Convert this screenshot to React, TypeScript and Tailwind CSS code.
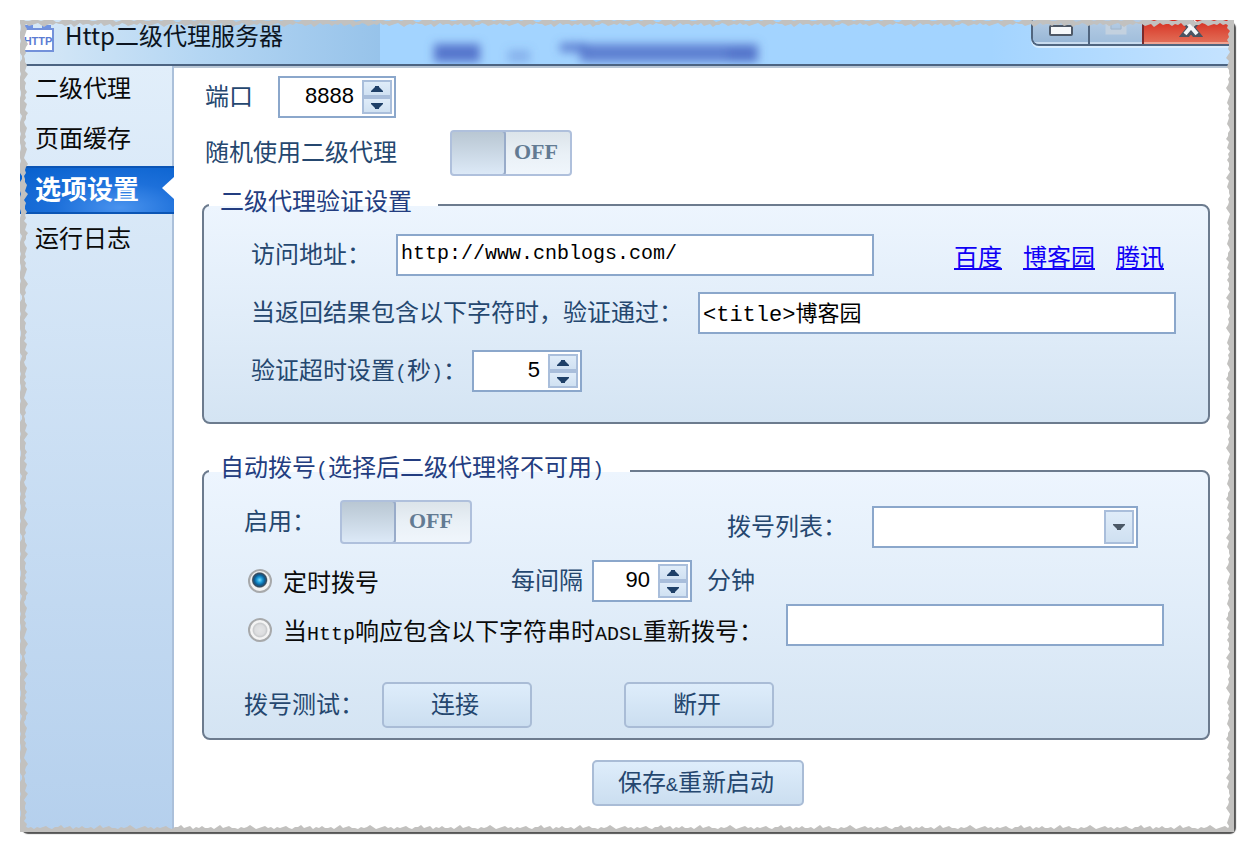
import React, { useState } from 'react';

const NAV_ITEMS = ['二级代理', '页面缓存', '选项设置', '运行日志'];

// bite depth of the torn border, one entry per 3px
const TEETH = [3, 5, 4, 6, 5, 4, 3, 5, 7, 5, 4, 5, 3, 4, 4, 6, 5, 4, 7, 5, 3, 5, 4, 4, 6, 4, 5, 3, 6, 5, 4, 7, 5, 5, 3, 4, 6, 5, 4, 5];
const NICKS = [0, 0, 1, 1, 0, 0, 0, 1, 0, 0, 0, 0, 2, 2, 0, 0, 0, 0, 1, 0, 0, 0, 0, 0, 1, 1, 0, 0, 0, 0, 0, 0, 2, 1, 0, 0, 0, 0, 1, 0];
const TILE = TEETH.length * 3;

const tearPath = (vertical: boolean, nicked: boolean) => {
  const point = (along: number, depth: number) => (vertical ? `${depth},${along}` : `${along},${depth}`);
  const reach = vertical ? 1 : 0;
  const inner = TEETH.map((d, i) => point(i * 3, d + reach));
  const outer = nicked ? NICKS.map((d, i) => point(i * 3, d)).reverse() : [point(0, 0)];
  return `M${[...inner, point(TILE, TEETH[0] + reach), point(TILE, 0), ...outer].join('L')}Z`;
};

interface TornEdgeProps {
  id: string;
  vertical?: boolean;
  nicked?: boolean;
  className: string;
}

const TornEdge: React.FC<TornEdgeProps> = ({ id, vertical = false, nicked = false, className }) => (
  <svg aria-hidden="true" className={`absolute pointer-events-none ${className}`}>
    <defs>
      <pattern id={id} width={vertical ? 9 : TILE} height={vertical ? TILE : 9} patternUnits="userSpaceOnUse">
        <path d={tearPath(vertical, nicked)} fill="#c2c1bf" />
      </pattern>
    </defs>
    <rect width="100%" height="100%" fill={`url(#${id})`} />
  </svg>
);

const Mono: React.FC<{ children: React.ReactNode }> = ({ children }) => (
  <span className="font-['Liberation_Mono',monospace] text-xl leading-none">{children}</span>
);

const Arrow: React.FC<{ down?: boolean }> = ({ down }) => (
  <svg width="12" height="6" viewBox="0 0 12 6" aria-hidden="true" className="shrink-0">
    <path d={down ? 'M0 0H12V1L8 5V6H4V5L0 1Z' : 'M0 6H12V5L8 1V0H4V1L0 5Z'} fill="currentColor" />
  </svg>
);

const Spinner: React.FC<{ id: string; initial: number; className: string }> = ({ id, initial, className }) => {
  const [value, setValue] = useState(initial);
  const stepClass = 'flex flex-1 items-center justify-center border-2 border-[#a9bedb] bg-linear-to-b from-[#dfecf9] to-[#d0e1f2] text-[#1f4068]';
  return (
    <div className={`flex h-[42px] shrink-0 border-2 border-[#8ba7cb] bg-white p-[2px] ${className}`}>
      <input
        id={id}
        value={value}
        onChange={(e) => setValue(Number(e.target.value) || 0)}
        className="w-full min-w-0 pb-[2px] pr-2 text-right font-['Liberation_Sans',sans-serif] text-[22px] text-black outline-none"
      />
      <div className="flex w-[30px] shrink-0 flex-col">
        <button type="button" aria-label="+" onClick={() => setValue(value + 1)} className={stepClass}><Arrow /></button>
        <button type="button" aria-label="-" onClick={() => setValue(value - 1)} className={stepClass}><Arrow down /></button>
      </div>
    </div>
  );
};

const Toggle: React.FC<{ id: string; className: string }> = ({ id, className }) => {
  const [on, setOn] = useState(false);
  return (
    <button
      id={id}
      type="button"
      role="switch"
      aria-checked={on}
      onClick={() => setOn(!on)}
      className={`flex shrink-0 overflow-hidden rounded-sm border-2 border-[#afc0dc] bg-linear-to-b from-[#dce4ea] via-[#e9f0f6] to-[#f0f6fc] ${on ? 'flex-row-reverse' : ''} ${className}`}
    >
      <span className="-my-[2px] -ml-[2px] w-14 shrink-0 self-stretch rounded-sm border-2 border-[#98abc9] bg-linear-to-b from-[#b9c7d3] to-[#dce9f7]" />
      <span className="flex-1 self-center pb-[2px] pr-1 text-center font-['Liberation_Serif',serif] text-[22px] font-bold leading-none text-[#637b93]">
        {on ? 'ON' : 'OFF'}
      </span>
    </button>
  );
};

const Group: React.FC<{ legend: React.ReactNode; className: string; children: React.ReactNode }> = ({ legend, className, children }) => (
  <fieldset className={`min-w-0 rounded-lg border-2 border-[#6c7b8e] bg-linear-to-b from-[#edf5fe] via-[#e1edf9] to-[#d4e4f3] pt-[10px] ${className}`}>
    <legend className="ml-[5px] h-[38px] pl-[11px] pr-[26px] leading-7 text-[#233d80]">{legend}</legend>
    {children}
  </fieldset>
);

const LABEL = 'pb-1';
const FIELD = "h-[42px] min-w-0 flex-1 border-2 border-[#8ba7cb] bg-white px-[3px] pb-1 font-['Liberation_Mono','Noto_Sans_CJK_SC',monospace] text-black outline-none";
const BUTTON = 'h-[46px] rounded-[5px] border-2 border-[#a9bcd6] bg-linear-to-b from-[#deedfb] to-[#cbdef0] pb-1 pr-1 text-[#25476f]';
const RADIO = 'size-6 shrink-0 appearance-none rounded-full border-2 border-[#a7a9ab] bg-[radial-gradient(circle,#e4e5e6_0,#dcdddf_35%,#c9cbcd_48%,#f4f4f4_56%,#f4f4f4_100%)] checked:bg-[radial-gradient(circle_at_48%_45%,#7fdcff_0,#1c9bd8_18%,#0c5c94_34%,#3a4c5c_46%,#f2f2f2_54%,#f2f2f2_100%)]';

const TitleBar: React.FC = () => (
  <header className="relative flex h-[46px] items-start justify-between border-b-2 border-[#4c6482] bg-linear-to-r from-[#a3d4ff] from-80% to-[#c5e3ff]">
    <div className="absolute inset-y-0 left-0 w-[360px] bg-linear-to-r from-[#d8e9f7] via-[#b4d6f3] to-[#97c3ea]" />
    <svg aria-hidden="true" className="absolute left-[400px] top-[12px] h-8 w-[350px]">
      <defs><filter id="haze" x="-10%" y="-100%" width="120%" height="300%"><feGaussianBlur stdDeviation="5" /></filter></defs>
      <g filter="url(#haze)" fill="#4d6cc6">
        <rect x="14" y="12" width="46" height="18" opacity=".9" />
        <rect x="88" y="18" width="22" height="12" opacity=".35" />
        <rect x="140" y="11" width="26" height="9" opacity=".8" />
        <rect x="160" y="12" width="178" height="18" opacity=".8" />
        <rect x="308" y="16" width="28" height="14" opacity=".6" />
      </g>
    </svg>
    <div className="relative flex items-start gap-[11px] pl-[2px]">
      <svg width="32" height="32" viewBox="0 0 32 32" aria-hidden="true">
        <path d="M3 5h8v4h9V5h9v4H3Z" fill="#6f93e2" />
        <rect x="1" y="9" width="30" height="22" fill="#fff" stroke="#7391da" strokeWidth="2" />
        <text x="16" y="25" textAnchor="middle" fontFamily="Liberation Sans, sans-serif" fontWeight="bold" fontSize="11" fill="#5b7cd3">HTTP</text>
      </svg>
      <h1 className="leading-[30px] text-[#0c1420]">Http二级代理服务器</h1>
    </div>
    <div className="relative mr-1 flex h-[26px] overflow-hidden rounded-bl-lg border-b-2 border-l-2 border-[#50657f] shadow-[0_2px_0_#d8ecfd]">
      <button type="button" aria-label="最小化" className="flex w-[57px] justify-center border-r-2 border-[#50657f] bg-linear-to-b from-[#b3cae2] to-[#96b5d5] shadow-[inset_0_-2px_0_#c9dcef]">
        <svg width="24" height="18" viewBox="0 0 24 18"><rect x="1" y="6" width="22" height="9" rx="1" fill="#f6f8fa" stroke="#4e5866" strokeWidth="2" /></svg>
      </button>
      <button type="button" aria-label="最大化" className="flex w-[54px] justify-center border-r-2 border-[#7b2a2a] bg-linear-to-b from-[#b5cce4] to-[#9fbddb] shadow-[inset_0_-2px_0_#c9dcef]">
        <svg width="24" height="18" viewBox="0 0 24 18"><path d="M4 2v10h16V2" fill="none" stroke="#c3d1df" strokeWidth="5" /><path d="M7 2v7h10V2" fill="none" stroke="#a3b6c9" strokeWidth="1" /></svg>
      </button>
      <button type="button" aria-label="关闭" className="flex w-[86px] justify-center bg-linear-to-b from-[#d6281c] to-[#e2705a] pl-2 shadow-[inset_0_-2px_0_#f0a493]">
        <svg width="24" height="18" viewBox="0 0 24 18">
          <path d="M12 5L4 15H9L12 11L15 15H20Z M12 11L6 3M12 11L18 3" fill="#4b5462" stroke="#4b5462" strokeWidth="4" />
          <path d="M7 1L18 14M17 1L6 14" stroke="#f4f6f8" strokeWidth="4" />
        </svg>
      </button>
    </div>
  </header>
);

const Sidebar: React.FC = () => {
  const [active, setActive] = useState(2);
  return (
    <nav className="flex w-[154px] shrink-0 flex-col gap-[2px] border-r-2 border-[#abc0da] bg-linear-to-b from-[#e1eefa] to-[#b5d0ed]">
      {NAV_ITEMS.map((item, i) => (
        <button
          key={item}
          type="button"
          onClick={() => setActive(i)}
          className={
            i === active
              ? '-mr-[2px] flex h-12 items-center justify-between border-y-2 border-[#0b55b5] bg-[radial-gradient(ellipse_at_65%_90%,#4a93ee_0,#1d70da_45%,#0660cd_100%)] pb-1 pl-[15px] text-[26px] font-bold text-white'
              : 'flex h-12 items-center pb-[6px] pl-[15px] text-[#0a0a0a]'
          }
        >
          {item}
          {i === active && (
            <svg width="12" height="22" viewBox="0 0 12 22" aria-hidden="true"><path d="M12 0V22L0 11Z" fill="#fff" /></svg>
          )}
        </button>
      ))}
    </nav>
  );
};

const App: React.FC = () => {
  const [mode, setMode] = useState('timer');

  return (
    <div className="flex min-h-screen bg-white p-5 font-['Noto_Sans_CJK_SC',sans-serif] text-2xl leading-8 text-[#25476f]">
      <div className="relative flex flex-1 flex-col rounded-md bg-white shadow-[2px_2px_1px_#555]">
        <TitleBar />
        <div className="flex flex-1">
          <Sidebar />
          <main className="flex min-w-0 flex-1 flex-col border-t-2 border-[#b9c7d6] pb-6 pl-7 pr-6 pt-2">
            <div className="flex items-center gap-[25px] pl-[3px]">
              <label htmlFor="port" className={LABEL}>端口</label>
              <Spinner id="port" initial={8888} className="w-[118px]" />
            </div>
            <div className="mt-3 flex items-center gap-[53px] pl-[3px]">
              <label htmlFor="random" className={LABEL}>随机使用二级代理</label>
              <Toggle id="random" className="h-[46px] w-[122px]" />
            </div>

            <Group legend="二级代理验证设置" className="mt-[10px] pb-[30px]">
              <div className="flex flex-col gap-4 pl-[47px] pr-8">
                <div className="flex items-center pr-3">
                  <label htmlFor="url" className={`mr-[25px] ${LABEL}`}>访问地址：</label>
                  <input id="url" defaultValue="http://www.cnblogs.com/" className={`text-xl ${FIELD}`} />
                  <div className="ml-20 flex gap-[21px] pt-[2px] text-[#0f00f5] underline decoration-2 underline-offset-2">
                    <a href="#baidu">百度</a>
                    <a href="#cnblogs">博客园</a>
                    <a href="#tencent">腾讯</a>
                  </div>
                </div>
                <div className="flex items-center gap-[15px]">
                  <label htmlFor="contains" className={LABEL}>当返回结果包含以下字符时，验证通过：</label>
                  <input id="contains" defaultValue="<title>博客园" className={`text-[22px] ${FIELD}`} />
                </div>
                <div className="flex items-center gap-[5px]">
                  <label htmlFor="timeout" className={LABEL}>验证超时设置<Mono>(</Mono>秒<Mono>)</Mono>：</label>
                  <Spinner id="timeout" initial={5} className="w-[110px]" />
                </div>
              </div>
            </Group>

            <Group legend={<>自动拨号<Mono>(</Mono>选择后二级代理将不可用<Mono>)</Mono></>} className="mt-7 pb-[10px]">
              <div className="flex flex-col pl-10 pr-11">
                <div className="flex h-12 justify-between pr-[26px]">
                  <div className="flex h-11 items-center gap-6">
                    <label htmlFor="enable" className={LABEL}>启用：</label>
                    <Toggle id="enable" className="h-11 w-[132px]" />
                  </div>
                  <div className="flex items-center gap-[25px] self-end">
                    <label htmlFor="dial-list" className={LABEL}>拨号列表：</label>
                    <div className="relative">
                      <select id="dial-list" className="block h-[42px] w-[266px] appearance-none border-2 border-[#8ba7cb] bg-white px-2 outline-none">
                        <option value=""></option>
                      </select>
                      <span className="pointer-events-none absolute inset-y-1 right-1 flex w-[30px] items-center justify-center border-2 border-[#a9bedb] bg-linear-to-b from-[#dfecf9] to-[#cfe0f1] text-[#4b5866]">
                        <Arrow down />
                      </span>
                    </div>
                  </div>
                </div>

                <div className="mt-3 flex items-center">
                  <label className="mr-[132px] flex items-center gap-[11px] pl-1 text-[#0a0a0a]">
                    <input type="radio" name="mode" checked={mode === 'timer'} onChange={() => setMode('timer')} className={RADIO} />
                    定时拨号
                  </label>
                  <label htmlFor="interval" className={`mr-[9px] ${LABEL}`}>每间隔</label>
                  <Spinner id="interval" initial={90} className="mr-[15px] w-[100px]" />
                  <span className={LABEL}>分钟</span>
                </div>

                <div className="mt-[2px] flex items-end gap-[23px]">
                  <label className="flex items-center gap-[11px] pl-1 text-[#0a0a0a]">
                    <input type="radio" name="mode" checked={mode === 'response'} onChange={() => setMode('response')} className={RADIO} />
                    <span>当<Mono>Http</Mono>响应包含以下字符串时<Mono>ADSL</Mono>重新拨号：</span>
                  </label>
                  <input aria-label="重新拨号" className={`text-xl ${FIELD}`} />
                </div>

                <div className="mt-9 flex items-center">
                  <span className={`mr-[18px] ${LABEL}`}>拨号测试：</span>
                  <button type="button" className={`mr-[92px] w-[150px] ${BUTTON}`}>连接</button>
                  <button type="button" className={`w-[150px] ${BUTTON}`}>断开</button>
                </div>
              </div>
            </Group>

            <div className="mt-5 flex justify-center pr-4">
              <button type="button" className={`w-[212px] ${BUTTON}`}>保存<Mono>&amp;</Mono>重新启动</button>
            </div>
          </main>
        </div>
        <TornEdge id="tear-top" nicked className="inset-x-0 top-0 h-[9px] w-full" />
        <TornEdge id="tear-bottom" className="inset-x-0 bottom-0 h-[9px] w-full rotate-180" />
        <TornEdge id="tear-left" vertical nicked className="inset-y-0 left-0 h-full w-[9px]" />
        <TornEdge id="tear-right" vertical className="inset-y-0 right-0 h-full w-[9px] rotate-180" />
      </div>
    </div>
  );
};

export default App;
